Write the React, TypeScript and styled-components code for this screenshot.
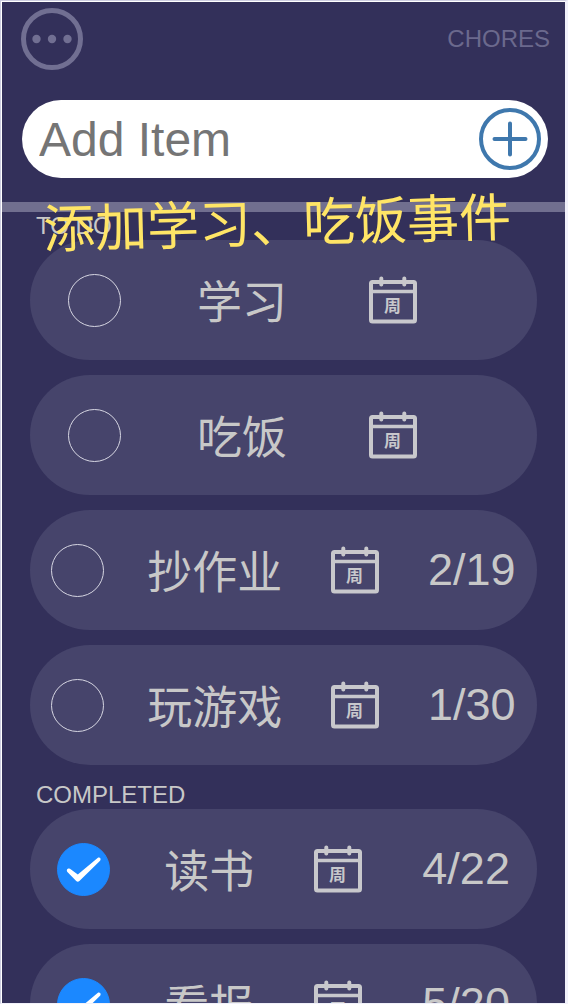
import React, { useState } from 'react';
import styled, { createGlobalStyle } from 'styled-components';

const GlobalStyle = createGlobalStyle`
  *, *::before, *::after { box-sizing: border-box; }
  body {
    margin: 0;
    background: #f1f1fa;
    font-family: "Liberation Sans", "Noto Sans CJK SC", sans-serif;
    color: #c8c8c8;
  }
`;

const Frame = styled.div`
  height: 100vh;
  border-style: solid;
  border-width: 1px 3px 1px 1px;
  border-color: #cdcde0 #f1f1fa #f1f1fa #cdcde0;
`;

const Screen = styled.div`
  height: 100%;
  display: flex;
  flex-direction: column;
  overflow: hidden;
  background: #33305a;
  border-top: 1px solid #ffffff;
  border-left: 1px solid #ffffff;
`;

const Header = styled.header`
  flex: none;
  display: flex;
  align-items: center;
  justify-content: space-between;
  padding: 6px 15px 0 19px;
`;

const IconButton = styled.button`
  display: block;
  flex: none;
  width: 62px;
  height: 62px;
  padding: 0;
  border: 0;
  border-radius: 50%;
  background: none;
  cursor: pointer;

  svg { display: block; }
`;

const ListName = styled.h1`
  margin: 0;
  font-size: 24px;
  line-height: 28px;
  font-weight: 400;
  color: #6b698d;
`;

const AddForm = styled.form`
  flex: none;
  display: flex;
  align-items: center;
  height: 78px;
  margin: 30px 17px 24px 20px;
  padding: 0 7px 0 17px;
  border-radius: 39px;
  background: #ffffff;
`;

const AddInput = styled.input`
  flex: 1;
  min-width: 0;
  height: 56px;
  padding: 0;
  border: 0;
  outline: 0;
  background: none;
  font: inherit;
  font-size: 48px;
  color: #333333;

  &::placeholder { color: #757575; opacity: 1; }
`;

const Lists = styled.main`
  flex: 1;
  min-height: 0;
  display: flex;
  flex-direction: column;
  gap: 16px;
  padding: 0 28px;
  border-top: 10px solid #716f8f;
  overflow-y: auto;
  scrollbar-width: none;
`;

const SectionTitle = styled.h2`
  margin: 0 6px;
  font-size: 24px;
  line-height: 28px;
  font-weight: 400;
`;

const Items = styled.ul`
  display: flex;
  flex-direction: column;
  gap: 15px;
  margin: 0;
  padding: 0;
  list-style: none;
`;

const Item = styled.li`
  display: flex;
  align-items: center;
  justify-content: space-around;
  height: 120px;
  border-radius: 60px;
  background: #46446b;
  font-size: 45px;
  line-height: 60px;
  white-space: nowrap;
`;

const Name = styled.label`
  padding-top: 8px;
`;

const Tick = styled.span`
  display: grid;
  flex: none;

  > * { grid-area: 1 / 1; }
  svg { pointer-events: none; }
`;

const TickBox = styled.input`
  appearance: none;
  width: 53px;
  height: 53px;
  margin: 0;
  border: 1px solid #d6d6e2;
  border-radius: 50%;
  cursor: pointer;

  &:checked {
    border-color: #1b88ff;
    background: #1b88ff;
  }
`;

const Calendar = styled.svg`
  display: block;
  flex: none;
`;

const Note = styled.p`
  position: absolute;
  top: 188px;
  left: 43px;
  margin: 0;
  font-family: "Noto Sans CJK SC", sans-serif;
  font-size: 52px;
  line-height: 64px;
  white-space: nowrap;
  color: #ffe566;
  transform: rotate(-1.5deg);
  pointer-events: none;
`;

type Chore = { id: string; name: string; date?: string };

const todo: Chore[] = [
  { id: 'study', name: '学习' },
  { id: 'eat', name: '吃饭' },
  { id: 'homework', name: '抄作业', date: '2/19' },
  { id: 'games', name: '玩游戏', date: '1/30' },
];

const completed: Chore[] = [
  { id: 'read', name: '读书', date: '4/22' },
  { id: 'news', name: '看报', date: '5/20' },
];

function ChoreRow({ chore, done }: { chore: Chore; done: boolean }) {
  const [checked, setChecked] = useState(done);
  return (
    <Item>
      <Tick>
        <TickBox
          id={chore.id}
          type="checkbox"
          checked={checked}
          onChange={(e) => setChecked(e.target.checked)}
        />
        {checked && (
          <svg width="53" height="53" viewBox="0 0 53 53" aria-hidden="true">
            <path
              d="M10.4 29C8.6 26.6 11.6 24.4 14 26.4L20.8 31.6L40.6 15C42.6 13.6 44.6 15.6 43.1 17.8L22.4 38Q20.8 39.4 19.2 38Z"
              fill="#fff"
            />
          </svg>
        )}
      </Tick>
      <Name htmlFor={chore.id}>{chore.name}</Name>
      <Calendar width="60" height="60" viewBox="0 0 60 60" aria-hidden="true">
        <g fill="none" stroke="#c8c8cc" strokeWidth="4">
          <rect x="8" y="12" width="44" height="39.5" rx="1.5" />
          <path d="M8 21.5H52" strokeWidth="3.5" />
          <path d="M18.3 8.5V14.5M41.3 8.5V14.5" strokeLinecap="round" />
        </g>
        <text
          x="29.5"
          y="42"
          textAnchor="middle"
          fontFamily="Noto Sans CJK SC, sans-serif"
          fontSize="17"
          fontWeight="700"
          fill="#c8c8cc"
        >
          周
        </text>
      </Calendar>
      <time>{chore.date}</time>
    </Item>
  );
}

export default function App() {
  const [text, setText] = useState('');
  return (
    <Frame>
      <GlobalStyle />
      <Screen>
        <Header>
          <IconButton type="button" aria-label="Menu">
            <svg width="62" height="62" viewBox="0 0 62 62">
              <circle cx="31" cy="31" r="28.5" fill="none" stroke="#716f92" strokeWidth="5" />
              <g fill="#716f92">
                <circle cx="15.5" cy="31" r="4.2" />
                <circle cx="31" cy="31" r="4.2" />
                <circle cx="46.5" cy="31" r="4.2" />
              </g>
            </svg>
          </IconButton>
          <ListName>CHORES</ListName>
        </Header>
        <AddForm onSubmit={(e) => e.preventDefault()}>
          <AddInput
            aria-label="Add Item"
            placeholder="Add Item"
            value={text}
            onChange={(e) => setText(e.target.value)}
          />
          <IconButton type="submit" aria-label="Add">
            <svg width="62" height="62" viewBox="0 0 62 62" fill="none" stroke="#3f78ad" strokeWidth="4">
              <circle cx="31" cy="31" r="29" />
              <path d="M31 15.5V46.5M15.5 31H46.5" strokeLinecap="round" />
            </svg>
          </IconButton>
        </AddForm>
        <Lists>
          <section>
            <SectionTitle>TO DO</SectionTitle>
            <Items>
              {todo.map((c) => (
                <ChoreRow key={c.id} chore={c} done={false} />
              ))}
            </Items>
          </section>
          <section>
            <SectionTitle>COMPLETED</SectionTitle>
            <Items>
              {completed.map((c) => (
                <ChoreRow key={c.id} chore={c} done />
              ))}
            </Items>
          </section>
        </Lists>
      </Screen>
      <Note>添加学习、吃饭事件</Note>
    </Frame>
  );
}
